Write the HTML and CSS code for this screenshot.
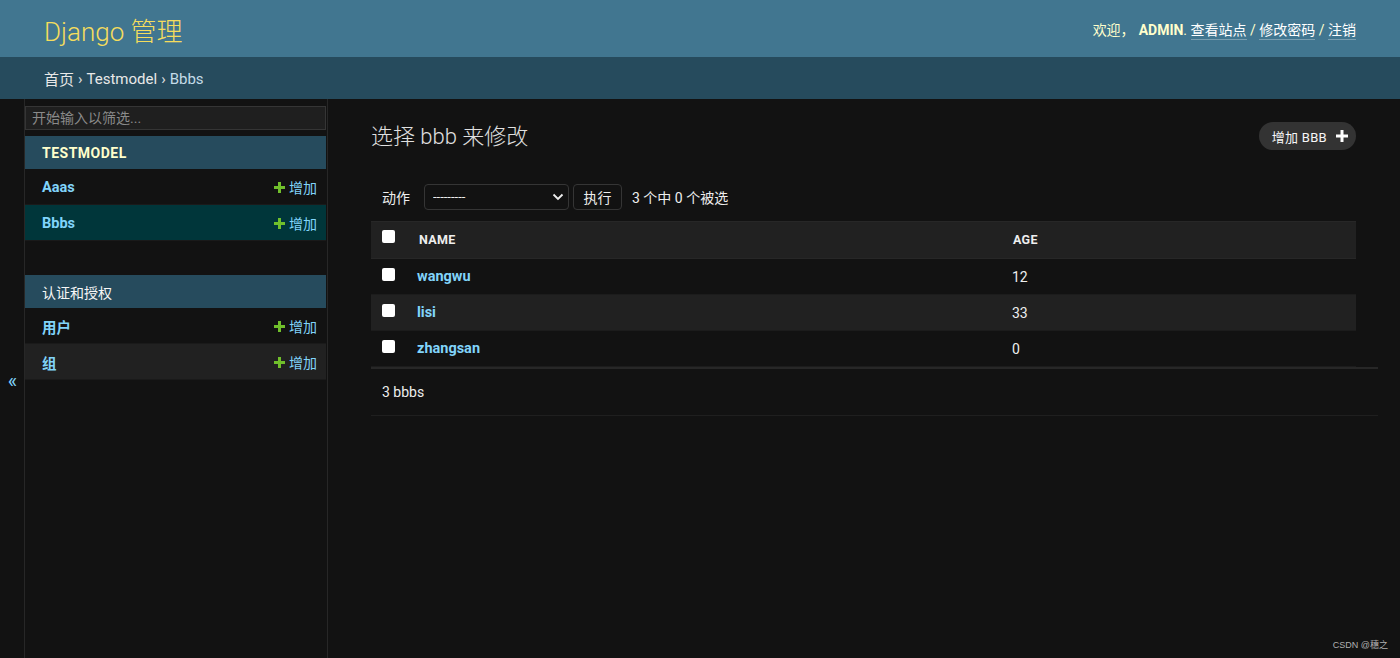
FILE: index.html
```html
<!DOCTYPE html>
<html lang="zh-hans">
<head>
<meta charset="utf-8">
<title>选择 bbb 来修改 | Django 站点管理员</title>
<link rel="stylesheet" href="styles.css">
</head>
<body>
<div class="page">
  <header class="header">
    <div class="branding">Django 管理</div>
    <div class="user-tools">
      欢迎，<strong class="user">ADMIN</strong>. <a href="#">查看站点</a> / <a href="#">修改密码</a> / <a href="#">注销</a>
    </div>
  </header>
  <nav class="breadcrumbs">
    <a href="#">首页</a><span class="sep">›</span><a href="#">Testmodel</a><span class="sep">›</span><span class="cur">Bbbs</span>
  </nav>
  <div class="main">
    <button class="toggle-nav">«</button>
    <aside class="nav-sidebar">
      <input class="nav-filter" type="search" placeholder="开始输入以筛选...">
      <div class="app-module">
        <div class="caption current">TESTMODEL</div>
        <div class="model-row">
          <a class="model-link" href="#">Aaas</a>
          <a class="addlink" href="#"><svg width="13" height="13" viewBox="0 0 13 13"><path d="M5 1h3v4h4v3H8v4H5V8H1V5h4z" fill="#70bf2b"/></svg>增加</a>
        </div>
        <div class="model-row selected">
          <a class="model-link" href="#">Bbbs</a>
          <a class="addlink" href="#"><svg width="13" height="13" viewBox="0 0 13 13"><path d="M5 1h3v4h4v3H8v4H5V8H1V5h4z" fill="#70bf2b"/></svg>增加</a>
        </div>
      </div>
      <div class="app-module">
        <div class="caption">认证和授权</div>
        <div class="model-row">
          <a class="model-link" href="#">用户</a>
          <a class="addlink" href="#"><svg width="13" height="13" viewBox="0 0 13 13"><path d="M5 1h3v4h4v3H8v4H5V8H1V5h4z" fill="#70bf2b"/></svg>增加</a>
        </div>
        <div class="model-row alt">
          <a class="model-link" href="#">组</a>
          <a class="addlink" href="#"><svg width="13" height="13" viewBox="0 0 13 13"><path d="M5 1h3v4h4v3H8v4H5V8H1V5h4z" fill="#70bf2b"/></svg>增加</a>
        </div>
      </div>
    </aside>
    <section class="content">
      <div class="title-row">
        <h1>选择 bbb 来修改</h1>
        <a class="addbtn" href="#">增加 BBB<svg width="12" height="12" viewBox="0 0 12 12"><path d="M4.5 0h3v4.5H12v3H7.5V12h-3V7.5H0v-3h4.5z" fill="#ffffff"/></svg></a>
      </div>
      <div class="actions">
        <label class="act-label">动作</label>
        <div class="select-wrap">
          <select class="act-select"><option>---------</option></select>
          <svg class="chev" width="12" height="8" viewBox="0 0 12 8"><path d="M1.5 1.5L6 6l4.5-4.5" fill="none" stroke="#eeeeee" stroke-width="1.8"/></svg>
        </div>
        <button class="go">执行</button>
        <span class="counter">3 个中 0 个被选</span>
      </div>
      <table class="results">
        <colgroup><col class="c-check"><col class="c-name"><col></colgroup>
        <thead>
          <tr><th><span class="cb"></span></th><th class="th-name">NAME</th><th class="th-age">AGE</th></tr>
        </thead>
        <tbody>
          <tr><td><span class="cb"></span></td><td class="td-name"><a href="#">wangwu</a></td><td class="td-age">12</td></tr>
          <tr class="alt"><td><span class="cb"></span></td><td class="td-name"><a href="#">lisi</a></td><td class="td-age">33</td></tr>
          <tr><td><span class="cb"></span></td><td class="td-name"><a href="#">zhangsan</a></td><td class="td-age">0</td></tr>
        </tbody>
      </table>
      <div class="paginator">3 bbbs</div>
    </section>
  </div>
  <div class="watermark">CSDN @穗之</div>
</div>
</body>
</html>
```
FILE: styles.css
```css
* { box-sizing: border-box; }
html, body { margin: 0; padding: 0; height: 100%; }
body {
  background: #121212;
  color: #eeeeee;
  font-family: Roboto, "Noto Sans CJK SC", "Liberation Sans", sans-serif;
  font-size: 14px;
  overflow: hidden;
}
a { text-decoration: none; }
.page { height: 658px; display: flex; flex-direction: column; position: relative; }

.header {
  height: 57px;
  flex: none;
  background: #417690;
  display: flex;
  align-items: center;
  justify-content: space-between;
  padding: 0 44px;
}
.branding { color: #f5dd5d; font-size: 26px; font-weight: 300; padding-top: 2px; }
.user-tools { color: #ffffcc; font-size: 14px; }
.user-tools .user { font-weight: 700; color: #ffffcc; margin-left: 4px; }
.user-tools a { color: #ffffff; border-bottom: 1px solid rgba(255,255,255,0.3); padding-bottom: 1px; }

.breadcrumbs {
  height: 42px;
  flex: none;
  background: #264b5d;
  display: flex;
  align-items: center;
  padding: 1px 44px 0;
  font-size: 15px;
  color: #c4dce8;
}
.breadcrumbs a { color: #e8e8e8; }
.breadcrumbs .sep { margin: 0 4px; color: #e0e0e0; }
.breadcrumbs .cur { color: #c4dce8; }

.main { flex: 1; display: flex; min-height: 0; }
.toggle-nav {
  width: 25px;
  flex: none;
  background: #121212;
  border: 0;
  border-right: 1px solid #272727;
  color: #81d4fa;
  font-size: 20px;
  padding: 4px 0 0 1px;
  font-family: Roboto, sans-serif;
}
.nav-sidebar {
  width: 303px;
  flex: none;
  border-right: 1px solid #272727;
  padding-top: 7px;
}
.nav-filter {
  display: block;
  width: 301px;
  height: 24px;
  margin: 0 0 6px 0;
  background: #1f1f1f;
  border: 1px solid #353535;
  color: #eeeeee;
  font-family: Roboto, "Noto Sans CJK SC", sans-serif;
  font-size: 14px;
  padding: 0 6px;
  outline: none;
}
.nav-filter::placeholder { color: #8a8a8a; }
.app-module { width: 301px; margin-bottom: 34px; }
.caption {
  height: 33px;
  background: #264b5d;
  display: flex;
  align-items: center;
  padding-left: 17px;
  color: #f7f7f7;
  font-size: 14px;
}
.caption.current { color: #ffffcc; font-weight: 700; letter-spacing: 0.5px; }
.model-row {
  height: 36px;
  display: flex;
  align-items: center;
  justify-content: space-between;
  padding: 1px 9px 0 17px;
  border-bottom: 1px solid #1a1a1a;
}
.model-row.selected { background: #00363a; }
.model-row.alt { background: #212121; }
.model-link { color: #81d4fa; font-weight: 700; font-size: 14.5px; }
.addlink { color: #81d4fa; font-size: 14px; display: flex; align-items: center; gap: 3px; }

.content { flex: 1; padding: 20px 22px 0 43px; min-width: 0; }
.title-row {
  height: 34px;
  display: flex;
  align-items: center;
  justify-content: space-between;
  margin-right: 22px;
}
h1 { margin: 0 0 4px 0; font-size: 22px; font-weight: 300; color: #e0e0e0; }
.addbtn {
  height: 28px;
  display: flex;
  align-items: center;
  gap: 9px;
  background: #333333;
  color: #f7f7f7;
  border-radius: 14px;
  padding: 0 8px 0 13px;
  font-size: 13px;
  letter-spacing: 0.3px;
}
.actions {
  margin-top: 25px;
  height: 37px;
  margin-right: 22px;
  display: flex;
  align-items: center;
  padding-left: 11px;
  font-size: 14px;
  color: #eeeeee;
}
.act-label { margin-right: 14px; }
.select-wrap { position: relative; width: 145px; height: 26px; }
.act-select {
  appearance: none;
  -webkit-appearance: none;
  width: 100%;
  height: 26px;
  background: #121212;
  border: 1px solid #353535;
  border-radius: 4px;
  color: #eeeeee;
  padding: 0 8px;
  font-family: Roboto, sans-serif;
  font-size: 13px;
}
.chev { position: absolute; right: 5px; top: 9px; pointer-events: none; }
.go {
  margin-left: 4px;
  height: 26px;
  width: 49px;
  background: #121212;
  border: 1px solid #353535;
  border-radius: 4px;
  color: #eeeeee;
  font-family: Roboto, "Noto Sans CJK SC", sans-serif;
  font-size: 14px;
  padding: 0;
}
.counter { margin-left: 10px; }

.results {
  margin-top: 6px;
  width: calc(100% - 22px);
  border-collapse: collapse;
}
.c-check { width: 35px; }
.c-name { width: 596px; }
.results th {
  height: 37px;
  background: #212121;
  text-align: left;
  font-size: 12.5px;
  font-weight: 700;
  color: #eeeeee;
  padding: 0 12px 1px 11px;
  border-top: 1px solid #272727;
  border-bottom: 1px solid #272727;
  letter-spacing: 0.3px;
}
.results th.th-name { padding-left: 12px; }
.results th.th-age { padding-left: 10px; }
.results td {
  height: 36px;
  padding: 0 10px 0 11px;
  font-size: 14px;
  color: #eeeeee;
  border-bottom: 1px solid #1c1c1c;
}
.results tr.alt td { background: #212121; }
.results td a { color: #81d4fa; font-weight: 700; font-size: 14.5px; }
.results td.td-name { padding-left: 10px; }
.results td.td-age { padding-left: 9px; }
.cb {
  display: inline-block;
  width: 13px;
  height: 13px;
  background: #ffffff;
  border-radius: 2px;
  vertical-align: 1px;
  margin-top: -6px;
}
.results th .cb { vertical-align: 1px; }
.paginator {
  height: 49px;
  border-top: 2px solid #272727;
  border-bottom: 1px solid #1f1f1f;
  display: flex;
  align-items: center;
  padding-left: 11px;
  font-size: 14px;
  color: #eeeeee;
}
.watermark {
  position: absolute;
  right: 12px;
  bottom: 7px;
  font-size: 9px;
  color: #b0b0b0;
  font-family: "Liberation Sans", "Noto Sans CJK SC", sans-serif;
}
```
